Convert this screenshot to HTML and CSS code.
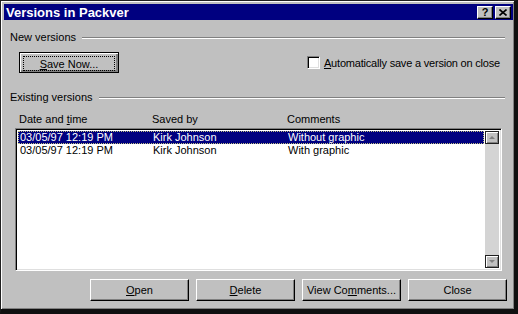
FILE: index.html
```html
<!DOCTYPE html>
<html lang="en">
<head>
    <meta charset="UTF-8">
    <title>Versions in Packver</title>
    <link rel="stylesheet" href="styles.css">
</head>
<body>
    <div class="window">
        <div class="titlebar">
            <span class="title">Versions in Packver</span>
            <div class="caption-buttons">
                <span class="cap-btn help">?</span>
                <span class="cap-btn">
                    <svg width="8" height="7" viewBox="0 0 8 7"><path d="M0.5 0.5 L7.5 6.5 M7.5 0.5 L0.5 6.5" stroke="#000" stroke-width="1.6"/></svg>
                </span>
            </div>
        </div>

        <div class="content">
            <div class="group-label"><span>New versions</span><div class="etch"></div></div>

            <div class="new-row">
                <button class="btn default"><span class="focus"><u>S</u>ave Now...</span></button>
                <label class="check"><span class="box"></span><span><u>A</u>utomatically save a version on close</span></label>
            </div>

            <div class="group-label existing"><span>Existing versions</span><div class="etch"></div></div>

            <div class="columns">
                <span>Date and <u>t</u>ime</span>
                <span>Saved by</span>
                <span>Comments</span>
            </div>

            <div class="listbox">
                <div class="rows">
                    <div class="row selected">
                        <span>03/05/97 12:19 PM</span>
                        <span>Kirk Johnson</span>
                        <span>Without graphic</span>
                    </div>
                    <div class="row">
                        <span>03/05/97 12:19 PM</span>
                        <span>Kirk Johnson</span>
                        <span>With graphic</span>
                    </div>
                </div>
                <div class="scrollbar">
                    <div class="arrow"><span class="tri up"></span></div>
                    <div class="track"></div>
                    <div class="arrow"><span class="tri down"></span></div>
                </div>
            </div>

            <div class="actions">
                <button class="btn"><u>O</u>pen</button>
                <button class="btn"><u>D</u>elete</button>
                <button class="btn">View Co<u>m</u>ments...</button>
                <button class="btn">Close</button>
            </div>
        </div>
    </div>
</body>
</html>
```

FILE: styles.css
```css
body {
    margin: 0;
    background-color: #000;
    font-family: 'Liberation Sans', Arial, sans-serif;
    font-size: 11px;
    color: #000;
}
.window {
    width: 518px;
    height: 314px;
    box-sizing: border-box;
    background-color: #c0c0c0;
    border-top: 1px solid #202020;
    border-left: 1px solid #202020;
    border-right: 4px solid #101010;
    border-bottom: 5px solid #101010;
    box-shadow: inset 1px 1px 0 #ffffff, inset -1px -1px 0 #808080;
    padding: 3px 1px 0 3px;
    display: flex;
    flex-direction: column;
}
.titlebar {
    height: 16px;
    background-color: #000080;
    display: flex;
    align-items: center;
    justify-content: space-between;
    padding: 0 2px 0 2px;
}
.title {
    color: #fff;
    font-weight: bold;
    font-size: 13px;
}
.caption-buttons {
    display: flex;
    gap: 2px;
}
.cap-btn {
    width: 16px;
    height: 13px;
    box-sizing: border-box;
    background-color: #c0c0c0;
    border-top: 1px solid #fff;
    border-left: 1px solid #fff;
    border-right: 1px solid #000;
    border-bottom: 1px solid #000;
    box-shadow: inset -1px -1px 0 #808080;
    display: flex;
    align-items: center;
    justify-content: center;
    font-weight: bold;
    font-size: 11px;
    line-height: 11px;
}
.content {
    padding: 0 6px 0 6px;
    display: flex;
    flex-direction: column;
}
.group-label {
    display: flex;
    align-items: center;
    margin-top: 11px;
    line-height: 13px;
}
.group-label.existing {
    margin-top: 18px;
}
.etch {
    flex: 1;
    height: 0;
    border-top: 1px solid #808080;
    border-bottom: 1px solid #fff;
    margin: 0 2px 0 6px;
}
.new-row {
    display: flex;
    align-items: center;
    margin-top: 8px;
    padding-left: 9px;
}
.btn {
    font-family: inherit;
    font-size: 11px;
    color: #000;
    background-color: #c0c0c0;
    height: 21px;
    padding: 0;
    box-sizing: border-box;
    border-top: 1px solid #fff;
    border-left: 1px solid #fff;
    border-right: 1px solid #000;
    border-bottom: 1px solid #000;
    box-shadow: inset -1px -1px 0 #808080;
}
.btn.default {
    width: 100px;
    border: 1px solid #000;
    box-shadow: inset 1px 1px 0 #fff, inset -2px -2px 0 #808080;
    padding: 3px;
}
.focus {
    display: flex;
    align-items: center;
    justify-content: center;
    height: 100%;
    border: 1px dotted #000;
}
.check {
    margin-left: auto;
    margin-right: 7px;
    display: flex;
    align-items: center;
    gap: 4px;
    letter-spacing: -0.2px;
}
.box {
    width: 13px;
    height: 13px;
    box-sizing: border-box;
    background-color: #fff;
    border-top: 1px solid #808080;
    border-left: 1px solid #808080;
    border-right: 1px solid #fff;
    border-bottom: 1px solid #fff;
    box-shadow: inset 1px 1px 0 #000, inset -1px -1px 0 #dfdfdf;
}
.columns {
    display: grid;
    grid-template-columns: 133px 135px 1fr;
    margin-top: 9px;
    padding-left: 9px;
    line-height: 13px;
}
.listbox {
    margin: 2px 5px 0 5px;
    height: 143px;
    box-sizing: border-box;
    background-color: #fff;
    border-top: 1px solid #808080;
    border-left: 1px solid #808080;
    border-right: 1px solid #fff;
    border-bottom: 1px solid #fff;
    box-shadow: inset 1px 1px 0 #000, inset -1px -1px 0 #dfdfdf;
    padding: 2px 2px 2px 2px;
    display: flex;
}
.rows {
    flex: 1;
}
.row {
    display: grid;
    grid-template-columns: 133px 135px 1fr;
    height: 13px;
    line-height: 13px;
    padding-left: 2px;
    box-sizing: border-box;
}
.row.selected {
    background-color: #000080;
    color: #fff;
    outline: 1px dotted #c0c080;
    outline-offset: -1px;
}
.scrollbar {
    width: 14px;
    display: flex;
    flex-direction: column;
    margin-left: 1px;
}
.track {
    flex: 1;
    background-color: #d4d4d4;
}
.arrow {
    height: 13px;
    box-sizing: border-box;
    background-color: #c0c0c0;
    border: 1px solid #202020;
    box-shadow: inset 1px 1px 0 #fff, inset -1px -1px 0 #808080;
    display: flex;
    align-items: center;
    justify-content: center;
}
.tri {
    width: 0;
    height: 0;
    border-left: 3px solid transparent;
    border-right: 3px solid transparent;
}
.tri.up {
    border-bottom: 3px solid #808080;
}
.tri.down {
    border-top: 3px solid #808080;
}
.actions {
    display: flex;
    justify-content: flex-end;
    gap: 7px;
    margin-top: 8px;
}
.actions .btn {
    width: 99px;
    height: 22px;
}
```
